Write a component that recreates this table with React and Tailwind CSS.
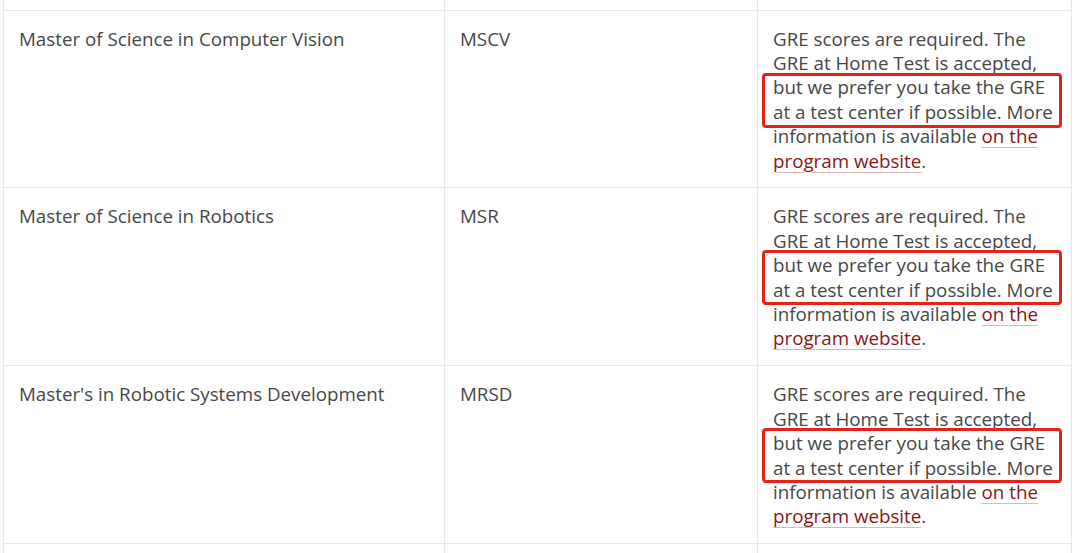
const ROWS = [
  { name: 'Master of Science in Computer Vision', code: 'MSCV' },
  { name: 'Master of Science in Robotics', code: 'MSR' },
  { name: "Master's in Robotic Systems Development", code: 'MRSD' },
];

function GreNote() {
  return (
    <div className="relative">
      <span>GRE scores are required. The GRE at Home Test is accepted, but we prefer you take the GRE at a test center if possible. More information is available </span>
      <a href="#" className="text-[#8c1515] underline decoration-[#e6b3b3] decoration-1 underline-offset-[4px]">on the program website</a>
      <span>.</span>
      <div className="absolute left-[-11px] w-[300px] top-[46px] h-[55px] border-[3px] border-[#e3221b] rounded-[4px] pointer-events-none" />
    </div>
  );
}

export default function App() {
  return (
    <div className="w-[1080px] h-[553px] overflow-hidden bg-white font-['Open_Sans',sans-serif] text-[18.75px] leading-[24.4px] text-[#474747]">
      <table className="ml-[3px] w-[1068px] border-collapse table-fixed">
        <colgroup>
          <col className="w-[441px]" />
          <col className="w-[313px]" />
          <col className="w-[314px]" />
        </colgroup>
        <tbody>
          <tr className="h-[10px]">
            <td className="border border-t-0 border-[#e8e8e8] p-0" />
            <td className="border border-t-0 border-[#e8e8e8] p-0" />
            <td className="border border-t-0 border-[#e8e8e8] p-0" />
          </tr>
          {ROWS.map((r) => (
            <tr key={r.code} className="align-top">
              <td className="border border-[#e8e8e8] pl-[15px] pr-4 pt-[16px] pb-[14.5px]">{r.name}</td>
              <td className="border border-[#e8e8e8] pl-[15px] pr-4 pt-[16px] pb-[14.5px]">{r.code}</td>
              <td className="border border-[#e8e8e8] pl-[15px] pr-[15px] pt-[16px] pb-[14.5px]">
                <GreNote />
              </td>
            </tr>
          ))}
          <tr className="h-[20px]">
            <td className="border border-[#e8e8e8] p-0" />
            <td className="border border-[#e8e8e8] p-0" />
            <td className="border border-[#e8e8e8] p-0" />
          </tr>
        </tbody>
      </table>
    </div>
  );
}
